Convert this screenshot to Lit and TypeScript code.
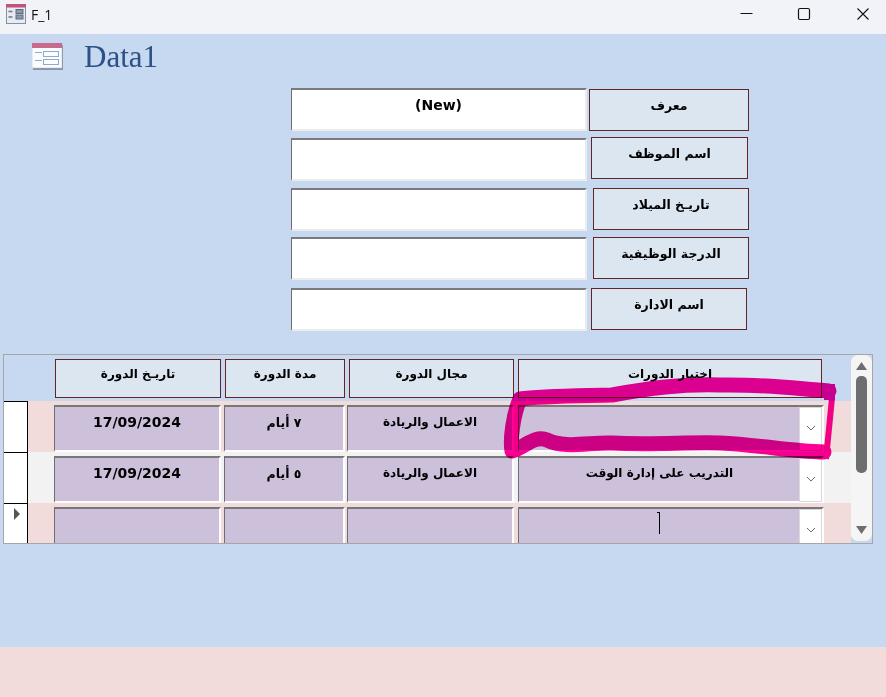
import { LitElement, html, css, svg } from "lit";
import { customElement } from "lit/decorators.js";

const FONT = `"DejaVu Sans", "Noto Sans", sans-serif`;

const chevron = html`<svg class="chev" width="10" height="6" viewBox="0 0 10 6"><path d="M1 1l4 4 4-4" fill="none" stroke="#6b6b6b" stroke-width="1"/></svg>`;

const formRows = [
  { cls: "r1", label: "معرف", value: "(New)" },
  { cls: "r2", label: "اسم الموظف", value: "" },
  { cls: "r3", label: "تاريـخ الميلاد", value: "" },
  { cls: "r4", label: "الدرجة الوظيفية", value: "" },
  { cls: "r5", label: "اسم الادارة", value: "" },
];

const dataRows = [
  { cls: "pink", date: "17/09/2024", days: "٧ أيام", field: "الاعمال والريادة", course: "", cur: false },
  { cls: "grey", date: "17/09/2024", days: "٥ أيام", field: "الاعمال والريادة", course: "التدريب على إدارة الوقت", cur: false },
  { cls: "pink last", date: "", days: "", field: "", course: "", cur: true },
];

@customElement("app-root")
export class AppRoot extends LitElement {
  static styles = css`
    :host { display: block; width: 886px; height: 697px; overflow: hidden; font-family: ${css([FONT] as any)}; background: #c6d9f1; color: #000; }
    .page { display: flex; flex-direction: column; height: 697px; }
    .titlebar { height: 34px; flex: none; background: #f1f3f9; display: flex; align-items: center; }
    .titlebar .appicon { margin-left: 6px; margin-top: -7px; }
    .titlebar .name { margin-left: 5px; margin-top: -5px; font: 14px "Open Sans", sans-serif; color: #111; }
    .winctl { margin-left: auto; display: flex; }
    .winctl svg { display: block; }
    .body { flex: 1; display: flex; flex-direction: column; min-height: 0; }
    .heading { height: 48px; display: flex; align-items: flex-start; padding: 9px 0 0 32px; box-sizing: border-box; }
    .heading svg { display: block; }
    .heading .t { margin-left: 20px; margin-top: -1px; font: 31px/30px "Liberation Serif", serif; color: #2c5285; }
    .form { margin-left: 291px; height: 266px; display: flex; flex-direction: column; margin-top: 6px; }
    .frow { display: flex; height: 43px; flex: none; align-items: flex-start; }
    .r2 { margin-top: 7px; } .r3 { margin-top: 7px; } .r4 { margin-top: 6px; } .r5 { margin-top: 8px; }
    .field { width: 296px; height: 43px; box-sizing: border-box; background: #fff; border-style: solid; border-width: 2px 2px 2px 1px; border-color: #7a7a7a #ececec #ececec #6e6e6e; font-weight: 700; font-size: 14px; line-height: 17px; text-align: center; padding-top: 7px; }
    .label { box-sizing: border-box; height: 42px; background: #dce6f1; border: 1px solid #632523; font-weight: 700; font-size: 12.5px; line-height: 17px; text-align: center; padding-top: 7px; }
    .r1 .label { margin-left: 2px; margin-top: 1px; width: 160px; }
    .r2 .label { margin-left: 4px; margin-top: -1px; width: 157px; }
    .r3 .label { margin-left: 6px; width: 156px; }
    .r4 .label { margin-left: 6px; width: 156px; }
    .r5 .label { margin-left: 4px; width: 156px; }
    .grid { position: relative; margin: 0 0 0 3px; width: 870px; height: 190px; box-sizing: border-box; border: 1px solid #a6a6a6; display: flex; background: #c6d9f1; flex: none; }
    .main { width: 847px; flex: none; height: 188px; overflow: hidden; }
    .head { height: 46px; display: flex; padding: 4px 0 0 51px; box-sizing: border-box; }
    .hc { box-sizing: border-box; height: 39px; background: #dce6f1; border: 1px solid #632523; font-weight: 700; font-size: 12px; line-height: 17px; text-align: center; padding-top: 6px; flex: none; }
    .h1 { width: 166px; } .h2 { width: 120px; margin-left: 4px; } .h3 { width: 165px; margin-left: 4px; } .h4 { width: 304px; margin-left: 4px; }
    .row { height: 51px; display: flex; flex: none; }
    .row.pink { background: #f2dcdb; }
    .row.grey { background: #f2f2f2; }
    .sel { width: 24px; height: 100%; box-sizing: border-box; background: #fff; border-top: 1px solid #000; border-right: 1px solid #000; flex: none; position: relative; }
    .spacer { width: 26px; flex: none; }
    .cell { box-sizing: border-box; height: 47px; margin-top: 4px; background: #ccc0da; border-style: solid; border-width: 2px 2px 2px 1px; border-color: #777 #fff #fff #6e6e6e; flex: none; font-weight: 700; line-height: 17px; text-align: center; padding-top: 7px; position: relative; }
    .date { width: 167px; font-size: 14px; }
    .days { width: 121px; margin-left: 3px; font-size: 12.5px; }
    .fld { width: 167px; margin-left: 2px; font-size: 12px; }
    .crs { width: 306px; margin-left: 4px; font-size: 12px; padding-right: 22px; }
    .dd { position: absolute; right: 0; top: 0; width: 23px; height: 44px; box-sizing: border-box; background: #fff; border: 1px solid #d9d9d9; display: flex; align-items: center; justify-content: center; }
    .last .cell { height: 60px; }
    .chev { display: block; margin-top: -3px; }
    .rowmark { position: absolute; left: 10px; top: 4px; }
    .caret { position: absolute; left: 140px; top: 3px; width: 1px; height: 22px; background: #000; }
    .caret::before { content: ""; position: absolute; left: -2px; top: 0; width: 2px; height: 1px; background: #000; }
    .sb { width: 21px; height: 186px; margin-top: 0; background: #f5f5f5; border-radius: 7px; display: flex; flex-direction: column; align-items: center; position: relative; flex: none; }
    .sb .up { margin-top: 7px; display: block; }
    .sb .thumb { margin-top: 6px; width: 11px; height: 97px; border-radius: 5px; background: #6e6e6e; }
    .sb .dn { margin-top: auto; margin-bottom: 7px; display: block; }
    .ink { position: absolute; left: -4px; top: -355px; width: 886px; height: 697px; pointer-events: none; mix-blend-mode: multiply; }
    .footer { margin-top: auto; height: 50px; background: #f2dcdb; flex: none; }
  `;

  render() {
    return html`
      <div class="page">
        <div class="titlebar">
          <svg class="appicon" width="20" height="20" viewBox="0 0 20 20">
            <rect x="0.5" y="0.5" width="19" height="19" fill="#e7ebf3" stroke="#8a8f9c"/>
            <rect x="0" y="0" width="20" height="3.5" fill="#c0557a"/>
            <path d="M2.5 7.5h4M2.5 13h4" stroke="#6f7686" stroke-width="1.5"/>
            <rect x="10" y="5.5" width="7" height="4" fill="#8d97ad" stroke="#5f6a80" stroke-width="1"/>
            <rect x="10" y="11" width="7" height="4" fill="#8d97ad" stroke="#5f6a80" stroke-width="1"/>
          </svg>
          <span class="name">F_1</span>
          <div class="winctl">
            <svg width="166" height="34" viewBox="0 0 166 34">
              <path d="M20.5 13.5h12" stroke="#111" stroke-width="1"/>
              <rect x="78.5" y="8.5" width="11" height="11" rx="1.5" fill="none" stroke="#111" stroke-width="1.2"/>
              <path d="M137.5 8.5l11 11M148.5 8.5l-11 11" stroke="#111" stroke-width="1.1"/>
            </svg>
          </div>
        </div>
        <div class="body">
          <div class="heading">
            <svg width="32" height="28" viewBox="0 0 32 28">
              <rect x="1" y="2" width="30" height="25" fill="#5f6678" opacity=".6"/>
              <rect x="0" y="0" width="30" height="25" fill="#fbfcfe" stroke="#aeb4c2" stroke-width=".5"/>
              <rect x="0" y="0" width="30" height="5" fill="#c76a8c"/>
              <path d="M3 9.5h7M3 17.5h7" stroke="#8eaad2" stroke-width="1"/>
              <rect x="11.5" y="8.5" width="15" height="5" fill="none" stroke="#8eaad2"/>
              <rect x="11.5" y="16.5" width="15" height="5" fill="none" stroke="#8eaad2"/>
            </svg>
            <span class="t">Data1</span>
          </div>
          <div class="form">
            ${formRows.map(
              (r) => html`<div class="frow ${r.cls}">
                <div class="field">${r.value}</div>
                <div class="label" dir="rtl">${r.label}</div>
              </div>`
            )}
          </div>
          <div class="grid">
            <div class="main">
              <div class="head">
                <div class="hc h1" dir="rtl">تاريـخ الدورة</div>
                <div class="hc h2" dir="rtl">مدة الدورة</div>
                <div class="hc h3" dir="rtl">مجال الدورة</div>
                <div class="hc h4" dir="rtl">اختيار الدورات</div>
              </div>
              ${dataRows.map(
                (r) => html`<div class="row ${r.cls}">
                  <div class="sel">
                    ${r.cur
                      ? html`<svg class="rowmark" width="7" height="12" viewBox="0 0 7 12"><path d="M0 0l6 6-6 6z" fill="#555"/></svg>`
                      : ""}
                  </div>
                  <div class="spacer"></div>
                  <div class="cell date">${r.date}</div>
                  <div class="cell days" dir="rtl">${r.days}</div>
                  <div class="cell fld" dir="rtl">${r.field}</div>
                  <div class="cell crs" dir="rtl">
                    ${r.course}
                    ${r.cur ? html`<span class="caret"></span>` : ""}
                    <div class="dd">${chevron}</div>
                  </div>
                </div>`
              )}
            </div>
            <div class="sb">
              <svg class="up" width="11" height="8" viewBox="0 0 11 8"><path d="M5.5 0L11 8H0z" fill="#6e6e6e"/></svg>
              <div class="thumb"></div>
              <svg class="dn" width="11" height="8" viewBox="0 0 11 8"><path d="M5.5 8L11 0H0z" fill="#6e6e6e"/></svg>
            </div>
            <svg class="ink" viewBox="0 0 886 697">
              ${svg`<path d="M824 452 C790 451 760 445 720 443 C690 442 650 445 612 443 C590 442 565 449 547 440 C535 435 525 447 512 451 C510 440 513 415 520 399 C540 396 570 396 612 395 C650 388 680 384 720 385 C760 384 790 388 829 391" fill="none" stroke="#ff0098" stroke-width="15" stroke-linejoin="round" stroke-linecap="round"/>
              <path d="M824 384 L835 384 L835 400 L824 400 Z" fill="#ff0098"/>
              <path d="M832 398 L826 459" fill="none" stroke="#ff0098" stroke-width="6"/>`}
            </svg>
          </div>
          <div class="footer"></div>
        </div>
      </div>
    `;
  }
}
